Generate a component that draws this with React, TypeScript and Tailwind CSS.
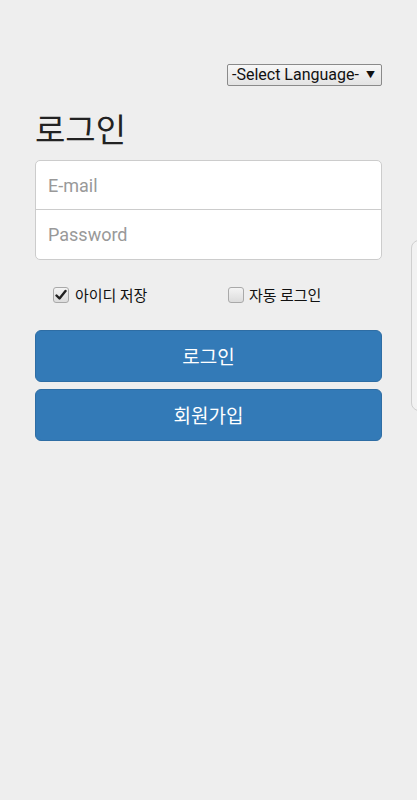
import React from "react";

function Check({ checked }: { checked?: boolean }) {
  return (
    <span className="flex h-[16px] w-[16px] items-center justify-center rounded-[3px] border border-[#a9a9a9] bg-gradient-to-b from-[#f4f4f4] to-[#dcdcdc]">
      {checked && (
        <svg width="12" height="12" viewBox="0 0 12 12">
          <path d="M1.5 6.5 L4.5 9.5 L10.5 2" fill="none" stroke="#222" strokeWidth="2.4" strokeLinecap="round" strokeLinejoin="round" />
        </svg>
      )}
    </span>
  );
}

export default function App() {
  const font = { fontFamily: "Roboto, 'Noto Sans CJK KR', sans-serif" };
  const kr = { fontFamily: "'Noto Sans CJK KR', sans-serif" };
  return (
    <div className="relative h-[800px] w-[417px] overflow-hidden bg-[#eeeeee]" style={font}>
      <div className="px-[35px] pt-[64px]">
        <div className="flex justify-end">
          <div className="flex h-[22px] w-[155px] items-center justify-between rounded-[2px] border border-[#8a8a8a] bg-gradient-to-b from-[#f7f7f7] to-[#e3e3e3] pl-[4px] pr-[6px] text-[16px] leading-none text-[#111]">
            <span>-Select Language-</span>
            <span className="text-[9px]">▼</span>
          </div>
        </div>
        <h1 className="mt-[16px] h-[52px] text-[33px] leading-[52px] text-[#222]" style={kr}>
          로그인
        </h1>
        <div className="mt-[6px] overflow-hidden rounded-[5px] border border-[#cccccc] bg-white">
          <div className="flex h-[49px] items-center border-b border-[#cccccc] px-[12px] text-[18px] text-[#999]">E-mail</div>
          <div className="flex h-[49px] items-center px-[12px] text-[18px] text-[#999]">Password</div>
        </div>
        <div className="mt-[25px] flex h-[20px] items-center text-[15px] text-[#111]" style={kr}>
          <div className="flex w-[193px] items-center gap-[6px] pl-[18px]">
            <Check checked />
            <span>아이디 저장</span>
          </div>
          <div className="flex items-center gap-[5px]">
            <Check />
            <span>자동 로그인</span>
          </div>
        </div>
        <div className="mt-[25px] flex flex-col gap-[7px]" style={kr}>
          <button className="h-[52px] w-full rounded-[6px] border border-[#2e6da4] bg-[#337ab7] text-[19px] text-white">로그인</button>
          <button className="h-[52px] w-full rounded-[6px] border border-[#2e6da4] bg-[#337ab7] text-[19px] text-white">회원가입</button>
        </div>
      </div>
      <div className="absolute left-[411px] top-[240px] h-[171px] w-[40px] rounded-[8px] border border-[#cfcfcf] bg-[#f2f2f2]" />
    </div>
  );
}
